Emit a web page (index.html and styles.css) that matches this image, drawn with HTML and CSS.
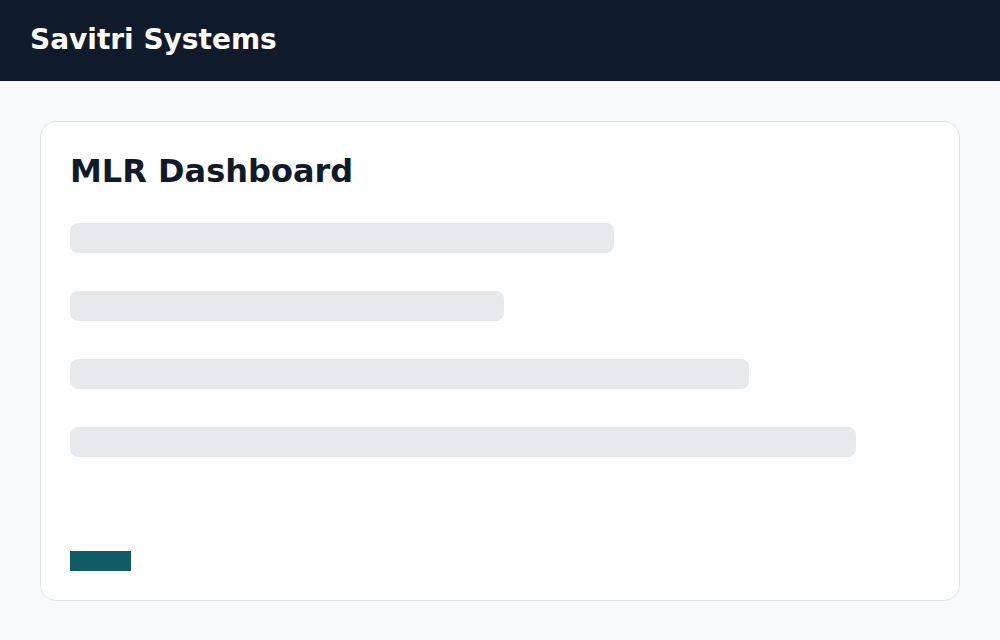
FILE: index.html
```html
<!DOCTYPE html>
<html>
<head>
<meta charset="utf-8">
<link rel="stylesheet" href="styles.css">
</head>
<body>
<header class="topbar">
  <span class="brand">Savitri Systems</span>
</header>
<main class="page">
  <section class="card">
    <h1 class="title">MLR Dashboard</h1>
    <div class="bars">
      <div class="bar" style="width:544px"></div>
      <div class="bar" style="width:434px"></div>
      <div class="bar" style="width:679px"></div>
      <div class="bar" style="width:786px"></div>
    </div>
    <button class="action" type="button"></button>
  </section>
</main>
</body>
</html>
```
FILE: styles.css
```css
* { box-sizing: border-box; }
html, body { margin: 0; padding: 0; }
body {
  background: #f7f9fb;
  font-family: "DejaVu Sans", sans-serif;
  width: 1000px;
  height: 640px;
  overflow: hidden;
}
.topbar {
  height: 80.5px;
  background: #0f1b2b;
  display: flex;
  align-items: center;
  padding: 0 30px;
}
.brand {
  color: #ffffff;
  font-weight: bold;
  font-size: 28px;
  line-height: 1;
}
.page {
  padding: 40px;
}
.card {
  background: #ffffff;
  border: 1px solid #e0e4e8;
  border-radius: 16px;
  height: 480px;
  padding: 29px;
  display: flex;
  flex-direction: column;
}
.title {
  margin: 0;
  font-size: 32px;
  line-height: 40px;
  font-weight: bold;
  color: #0f1b2b;
}
.bars {
  margin-top: 32px;
  display: flex;
  flex-direction: column;
  gap: 38px;
}
.bar {
  height: 30px;
  background: #e7eaed;
  border-radius: 8px;
}
.action {
  margin-top: 94px;
  width: 61px;
  height: 21px;
  border: none;
  padding: 0;
  background: #0f5c64;
  border-radius: 0;
}
```
